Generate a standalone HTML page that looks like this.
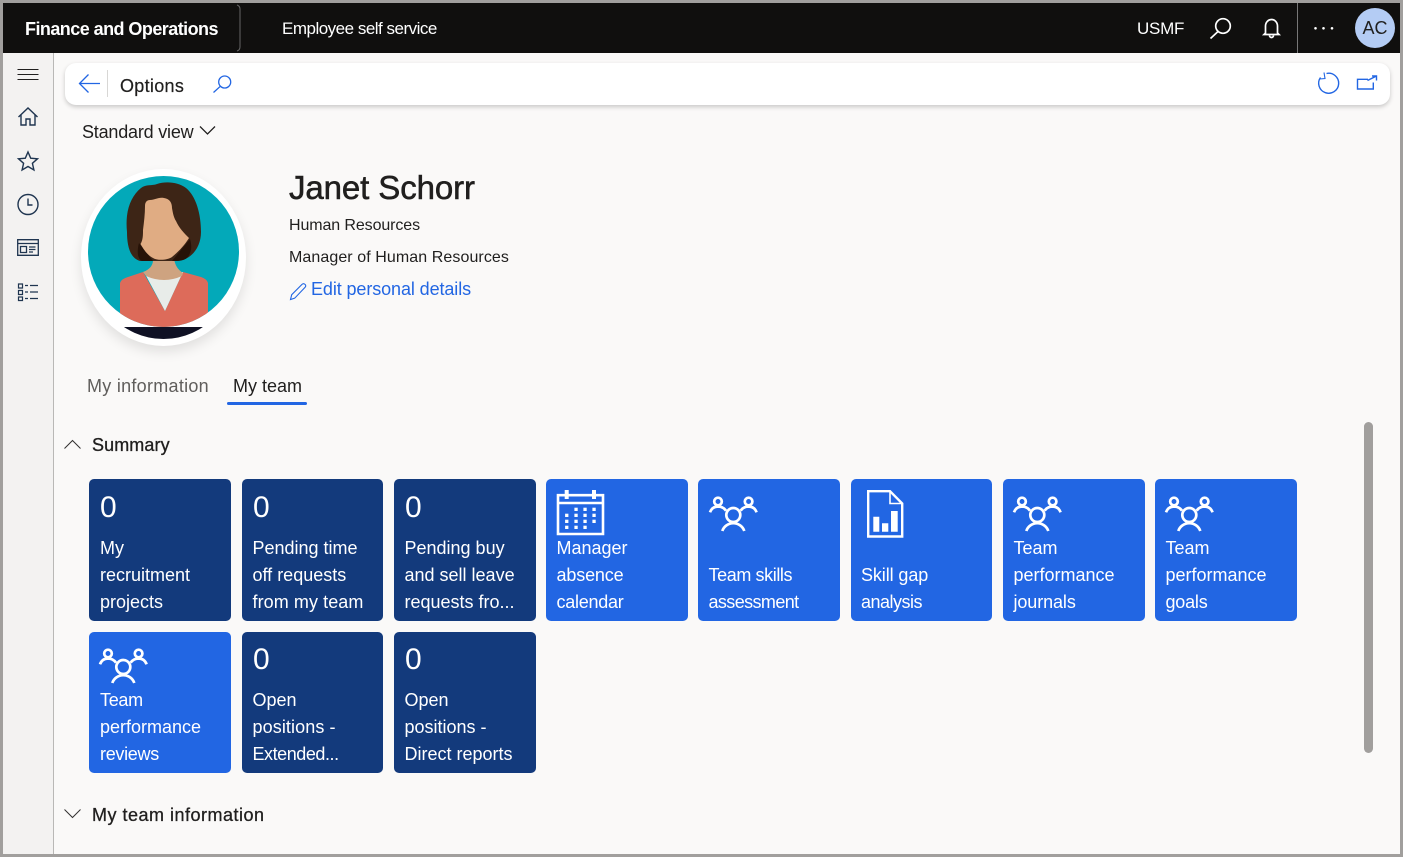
<!DOCTYPE html>
<html lang="en"><head><meta charset="utf-8"><title>Employee self service</title>
<style>
html,body{margin:0;padding:0}
body{width:1403px;height:857px;position:relative;overflow:hidden;background:#faf9f8;font-family:"Liberation Sans",sans-serif;color:#201f1e}
.a{position:absolute;white-space:nowrap}
.frame{position:absolute;left:0;top:0;width:1397px;height:851px;border:3px solid #a19f9d;z-index:20;pointer-events:none}
.head{position:absolute;left:3px;top:3px;width:1397px;height:50px;background:#100f0e}
.side{position:absolute;left:3px;top:53px;width:50px;height:801px;background:#f3f2f1;border-right:1px solid #b9b8b6}
.bar{position:absolute;left:65px;top:63px;width:1325px;height:42px;background:#fff;border-radius:11px;box-shadow:0 2px 5px rgba(0,0,0,.2)}
.t{position:absolute;width:142px;height:142px;border-radius:5px;color:#fff;font-size:18px;line-height:27px}
.d{background:#133a7c}.b{background:#2266e3}
.t span{position:absolute;left:10.500px;top:56px;white-space:nowrap}
.t.r2 span{top:55px}
.t .n{font-size:30px;line-height:34px;top:12px;left:11px}
.t.r2 .n{top:11px}
.t .l2{top:83px}
.t u{text-decoration:none}
svg{position:absolute;overflow:visible}
</style></head><body>
<div class="head"></div>
<svg style="left:236px;top:5px" width="6" height="46"><path d="M1 0q3 1 3 4v38q0 3-3 4" fill="none" stroke="#666" stroke-width="1"/></svg>
<div class="a" style="left:25px;top:17px;font-size:18px;line-height:24px;font-weight:bold;color:#fff;letter-spacing:-.55px">Finance and Operations</div>
<div class="a" style="left:282px;top:17px;font-size:17px;line-height:23px;color:#fff;letter-spacing:-.5px">Employee self service</div>
<div class="a" style="left:1137px;top:17px;font-size:17px;line-height:24px;color:#fff;letter-spacing:-.25px">USMF</div>
<svg style="left:1208px;top:16px" width="26" height="26" fill="none" stroke="#fff" stroke-width="1.700"><circle cx="15" cy="10" r="7.300"/><path d="M10 15.500L2.500 22.500"/></svg>
<svg style="left:1262px;top:17px" width="20" height="22" fill="none" stroke="#fff" stroke-width="1.700"><path d="M3.500 16V9a6 6.500 0 0 1 12 0v7l1.500 1.500H2z"/><path d="M7.500 18.500a2 2 0 0 0 4 0"/></svg>
<div class="a" style="left:1297px;top:3px;width:1px;height:50px;background:#777"></div>
<svg style="left:1313px;top:26px" width="22" height="5" fill="#fff"><circle cx="2.500" cy="2.300" r="1.300"/><circle cx="10.500" cy="2.300" r="1.300"/><circle cx="19" cy="2.300" r="1.300"/></svg>
<div class="a" style="left:1355px;top:8px;width:40px;height:40px;border-radius:50%;background:#b4ccf4;color:#201f1e;font-size:18px;line-height:40px;text-align:center">AC</div>

<div class="side"></div>
<svg style="left:17px;top:68px" width="22" height="14" stroke="#201f1e" stroke-width="1"><path d="M.5 1.500h21M.5 6.500h21M.5 11.500h21"/></svg>
<svg style="left:17px;top:106px" width="22" height="22" fill="none" stroke="#1f3550" stroke-width="1.400"><path d="M1.500 11L11 2l9.500 9M4 9v10h5v-6h4v6h5V9"/></svg>
<svg style="left:17px;top:150px" width="22" height="22" fill="none" stroke="#1f3550" stroke-width="1.400"><path d="M11 2l2.700 6.200 6.800.6-5.100 4.500 1.500 6.700-5.900-3.500-5.900 3.500 1.500-6.700-5.100-4.500 6.800-.6z"/></svg>
<svg style="left:17px;top:193px" width="22" height="22" fill="none" stroke="#1f3550" stroke-width="1.400"><circle cx="11" cy="11.500" r="10"/><path d="M11 5.500v6.500h4.500"/></svg>
<svg style="left:17px;top:239px" width="22" height="18" fill="none" stroke="#1f3550" stroke-width="1.300"><path d="M.7.700h20.600v15.600H.7zM.7 4.500h20.600M3.500 7.500h6v6h-6zM12 8h6.500M12 10.500h6.500M12 13h4"/></svg>
<svg style="left:17px;top:283px" width="22" height="18" fill="none" stroke="#1f3550" stroke-width="1.200"><path d="M1.500 1h4v4h-4zM1.500 7.500h4v4h-4zM1.500 14h4v3.500h-4zM8 2.500h3M13 2.500h8M8 9h3M13 9h8M8 15.500h3M13 15.500h8"/></svg>

<div class="bar"></div>
<svg style="left:78px;top:73px" width="24" height="20" fill="none" stroke="#2266e3" stroke-width="1.300"><path d="M22 10.500H1.500M10.500 1.500l-9 9 9 9"/></svg>
<div class="a" style="left:107px;top:70px;width:1px;height:27px;background:#d8d7d5"></div>
<div class="a" style="left:120px;top:74px;font-size:18px;line-height:24px;letter-spacing:.3px;-webkit-text-stroke:.2px #201f1e">Options</div>
<svg style="left:212px;top:74px" width="21" height="21" fill="none" stroke="#2266e3" stroke-width="1.300"><circle cx="12.700" cy="8" r="6"/><path d="M8.300 12.300L1.500 18.500"/></svg>
<svg style="left:1317px;top:71px" width="24" height="24" fill="none" stroke="#2266e3" stroke-width="1.400"><path d="M9.500 2.500A10 10 0 1 1 3.500 6.500"/><path d="M7 1.500L8 7.500 2.500 8" stroke-width="1.100"/></svg>
<svg style="left:1356px;top:75px" width="22" height="17" fill="none" stroke="#2266e3" stroke-width="1.400"><path d="M12 4.300H1.500V14H17.300V7.500M11.500 5.500L20 1.200M16 1h4.500v4.500"/></svg>

<div class="a" style="left:82px;top:120px;font-size:18px;line-height:24px;letter-spacing:-.2px">Standard view</div>
<svg style="left:199px;top:125px" width="18" height="11" fill="none" stroke="#201f1e" stroke-width="1.300"><path d="M1 1.500l7.500 7.500 7.500-7.500"/></svg>

<div class="a" style="left:81px;top:169px;width:165px;height:177px;border-radius:50%;background:#fff;box-shadow:0 6px 12px rgba(0,0,0,.1)"></div>
<svg style="left:88px;top:176px" width="151" height="164" viewBox="88 176 151 164">
<defs><clipPath id="c"><circle cx="163.500" cy="251.500" r="75.500"/></clipPath><clipPath id="e"><ellipse cx="163.500" cy="258" rx="75.500" ry="81"/></clipPath></defs>
<path d="M124 327H203V340H124z" fill="#0f1124" clip-path="url(#e)"/>
<g clip-path="url(#c)">
<rect x="88" y="176" width="151" height="152" fill="#03a9b9"/>
<path d="M120 283Q121 279 128 277L143 272L165 311L183 272L201 277Q207 279 208 283V330H120z" fill="#dd6b5a"/>
<path d="M144 272L165 311L183 272z" fill="#e8ece9"/>
<path d="M153 258Q154 268 143 272L146 276Q164 284 182 276L183 273Q175 268 174 258z" fill="#cea380"/>
<path d="M127 232C125 212 130 197 141 188C146 184 152 186 157 184C166 181 178 182 186 188C196 196 201 214 201 232C201 244 195 254 187 258C182 261 178 261 175 261H140C130 258 127 246 127 232z" fill="#3d2516"/>
<path d="M139 243L153 261H142C137 259 137 250 139 243z" fill="#261207"/>
<path d="M190 239C192 246 192 252 187 258C183 261 178 261 172 261z" fill="#261207"/>
<path d="M145 206C145 202 147 200 150 200C155 200 158 197 164 198C170 199 172 203 172 208C173 214 174 218 176 221C179 228 184 233 189 238C184 246 178 252 172 257C168 260 158 261 153 258C149 256 145 252 140.500 244C143 240 143 235 143 230C144 222 145 214 145 206z" fill="#e0ac83"/>
</g></svg>

<div class="a" style="left:289px;top:168px;font-size:33px;line-height:40px;letter-spacing:-.1px;color:#201f1e;-webkit-text-stroke:.55px #201f1e">Janet Schorr</div>
<div class="a" style="left:289px;top:215px;font-size:16px;line-height:22px;letter-spacing:-.1px">Human Resources</div>
<div class="a" style="left:289px;top:247px;font-size:16px;line-height:22px;letter-spacing:.08px">Manager of Human Resources</div>
<svg style="left:289px;top:282px" width="19" height="19" fill="none" stroke="#2266e3" stroke-width="1.100"><path d="M1.500 17.500l1.200-4.800L13 2.400q1.500-1.400 3 0t0 3L5.700 16.200z"/></svg>
<div class="a" style="left:311px;top:277px;font-size:18px;line-height:24px;color:#2266e3;letter-spacing:-.1px">Edit personal details</div>

<div class="a" style="left:87px;top:374px;font-size:18px;line-height:24px;color:#605e5c;letter-spacing:.28px">My information</div>
<div class="a" style="left:233px;top:374px;font-size:18px;line-height:24px;color:#201f1e;letter-spacing:0">My team</div>
<div class="a" style="left:227px;top:402px;width:80px;height:3px;border-radius:2px;background:#2266e3"></div>

<svg style="left:64px;top:438px" width="18" height="12" fill="none" stroke="#323130" stroke-width="1"><path d="M.5 10.500L8.500 2.500l8 8"/></svg>
<div class="a" style="left:92px;top:433px;font-size:18px;line-height:24px;letter-spacing:.1px;-webkit-text-stroke:.3px #201f1e">Summary</div>

<div class="t d" style="left:89px;top:479px"><span class="n">0</span><span style="left:11px">My<br>recruitment<br>projects</span></div>
<div class="t d" style="left:242px;top:479px;width:141px"><span class="n">0</span><span>Pending time<br>off requests<br><u style="letter-spacing:.08px">from my team</u></span></div>
<div class="t d" style="left:394px;top:479px"><span class="n">0</span><span>Pending buy<br>and sell leave<br>requests fro...</span></div>
<div class="t b" style="left:546px;top:479px"><span>Manager<br><u style="letter-spacing:-.15px">absence</u><br><u style="letter-spacing:-.25px">calendar</u></span>
<svg style="left:10px;top:10px" width="50" height="48"><path d="M2 6.200h45V45H2zM2 14h45" fill="none" stroke="#fff" stroke-width="2.600"/><g fill="#fff"><rect x="8.700" y="1" width="4" height="9"/><rect x="36" y="1" width="4" height="9"/><rect x="18.400" y="18.700" width="3.300" height="3.300"/><rect x="27.400" y="18.700" width="3.300" height="3.300"/><rect x="36.400" y="18.700" width="3.300" height="3.300"/><rect x="9.100" y="24.700" width="3.300" height="3.300"/><rect x="18.400" y="24.700" width="3.300" height="3.300"/><rect x="27.400" y="24.700" width="3.300" height="3.300"/><rect x="36.400" y="24.700" width="3.300" height="3.300"/><rect x="9.100" y="30.700" width="3.300" height="3.300"/><rect x="18.400" y="30.700" width="3.300" height="3.300"/><rect x="27.400" y="30.700" width="3.300" height="3.300"/><rect x="36.400" y="30.700" width="3.300" height="3.300"/><rect x="9.100" y="36.700" width="3.300" height="3.300"/><rect x="18.400" y="36.700" width="3.300" height="3.300"/><rect x="27.400" y="36.700" width="3.300" height="3.300"/></g></svg></div>
<div class="t b" style="left:698px;top:479px"><span class="l2"><u style="letter-spacing:-.4px">Team skills</u><br><u style="letter-spacing:-.6px">assessment</u></span>
<svg style="left:11px;top:16px" width="49" height="38" fill="none" stroke="#fff" stroke-width="2.700"><use href="#ppl"/></svg></div>
<div class="t b" style="left:851px;top:479px;width:141px"><span class="l2" style="left:10px"><u style="letter-spacing:-.1px">Skill gap</u><br><u style="letter-spacing:-.5px">analysis</u></span>
<svg style="left:16px;top:11px" width="38" height="48"><path d="M1.200 1.200H23L35.200 13.500V46.500H1.200z" fill="none" stroke="#fff" stroke-width="2.400"/><path d="M23 1.500V13.500H35" fill="none" stroke="#fff" stroke-width="1.600"/><path d="M6.300 26.700h6v15h-6zM15 33.300h6.300v8.400H15zM24 21h6.700v20.700H24z" fill="#fff"/></svg></div>
<div class="t b" style="left:1003px;top:479px"><span>Team<br>performance<br><u style="letter-spacing:-.1px">journals</u></span>
<svg style="left:10px;top:16px" width="49" height="38" fill="none" stroke="#fff" stroke-width="2.700"><use href="#ppl"/></svg></div>
<div class="t b" style="left:1155px;top:479px"><span>Team<br>performance<br><u style="letter-spacing:-.2px">goals</u></span>
<svg style="left:10px;top:16px" width="49" height="38" fill="none" stroke="#fff" stroke-width="2.700"><use href="#ppl"/></svg></div>
<div class="t b r2" style="left:89px;top:632px;height:141px"><span style="left:11px"><u style="letter-spacing:-.3px">Team</u><br>performance<br><u style="letter-spacing:-.3px">reviews</u></span>
<svg style="left:10px;top:15px" width="49" height="38" fill="none" stroke="#fff" stroke-width="2.700"><use href="#ppl"/></svg></div>
<div class="t d r2" style="left:242px;top:632px;width:141px;height:141px"><span class="n">0</span><span>Open<br><u style="letter-spacing:.1px">positions -</u><br><u style="letter-spacing:-.45px">Extended...</u></span></div>
<div class="t d r2" style="left:394px;top:632px;height:141px"><span class="n">0</span><span>Open<br>positions -<br>Direct reports</span></div>

<svg width="0" height="0" style="left:0;top:0"><defs><g id="ppl"><circle cx="9" cy="6.500" r="3.800"/><circle cx="39.600" cy="6.500" r="3.800"/><circle cx="24.300" cy="20" r="7"/><path d="M13.300 36A11.500 11 0 0 1 35.300 36M1 17.300Q3 11.700 9 11.500Q14 11.500 17 15.700M47.600 17.300Q45.600 11.700 39.600 11.500Q34.600 11.500 31.600 15.700"/></g></defs></svg>

<div class="a" style="left:1364px;top:422px;width:9px;height:331px;border-radius:5px;background:#a19f9d"></div>
<svg style="left:64px;top:808px" width="18" height="12" fill="none" stroke="#323130" stroke-width="1"><path d="M.5 1.500l8 8 8-8"/></svg>
<div class="a" style="left:92px;top:803px;font-size:18px;line-height:24px;letter-spacing:.5px;-webkit-text-stroke:.3px #201f1e">My team information</div>
<div class="frame"></div>
</body></html>
